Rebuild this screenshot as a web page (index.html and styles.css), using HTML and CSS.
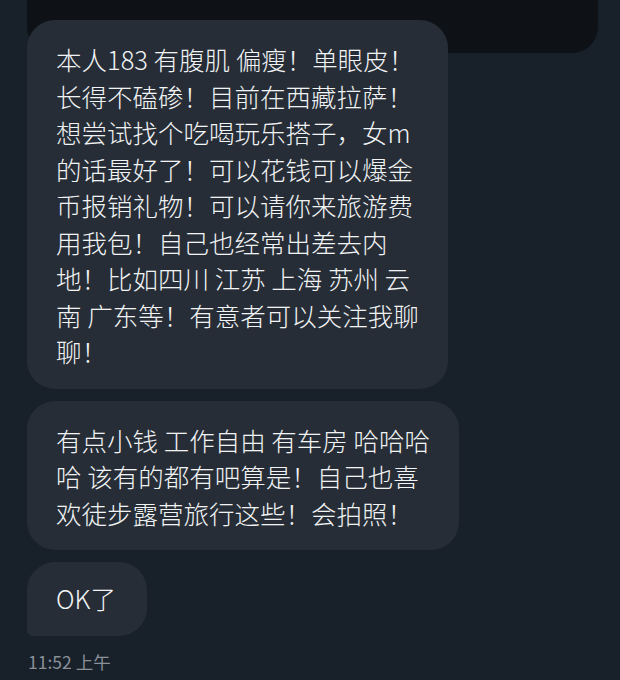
FILE: index.html
```html
<!DOCTYPE html>
<html lang="zh-CN">
<head>
<meta charset="utf-8">
<title>Chat</title>
<link rel="stylesheet" href="styles.css">
</head>
<body>
<div class="chat">
  <div class="prev"></div>
  <div class="group">
    <div class="bubble">本人183 有腹肌 偏瘦！单眼皮！<br>长得不磕碜！目前在西藏拉萨！<br>想尝试找个吃喝玩乐搭子，女m<br>的话最好了！可以花钱可以爆金<br>币报销礼物！可以请你来旅游费<br>用我包！自己也经常出差去内<br>地！比如四川 江苏 上海 苏州 云<br>南 广东等！有意者可以关注我聊<br>聊！</div>
    <div class="bubble">有点小钱 工作自由 有车房 哈哈哈<br>哈 该有的都有吧算是！自己也喜<br>欢徒步露营旅行这些！会拍照！</div>
    <div class="bubble bubble-last">OK了</div>
    <div class="time">11:52 上午</div>
  </div>
</div>
</body>
</html>
```
FILE: styles.css
```css
html, body {
  margin: 0;
  padding: 0;
  background: #18202a;
}
body {
  width: 620px;
  height: 680px;
  overflow: hidden;
  font-family: "Noto Sans CJK SC", "Noto Sans", sans-serif;
}
.chat {
  padding-left: 27px;
}
.prev {
  width: 571px;
  height: 53px;
  background: #0e1217;
  border-radius: 0 0 26px 26px;
}
.group {
  position: relative;
  margin-top: -33px;
  display: flex;
  flex-direction: column;
  align-items: flex-start;
  gap: 12px;
}
.bubble {
  background: #262d36;
  color: #f1f3f5;
  font-size: 25.5px;
  font-weight: 300;
  line-height: 36.5px;
  padding: 21px 29px 19px 29px;
  border-radius: 28px;
  white-space: nowrap;
}
.bubble-last {
  padding-top: 18px;
  padding-bottom: 19px;
  padding-right: 31px;
  border-bottom-left-radius: 6px;
}
.time {
  margin-top: 2px;
  padding-left: 1px;
  color: #8a9098;
  font-size: 17.5px;
  line-height: 24px;
}
```
